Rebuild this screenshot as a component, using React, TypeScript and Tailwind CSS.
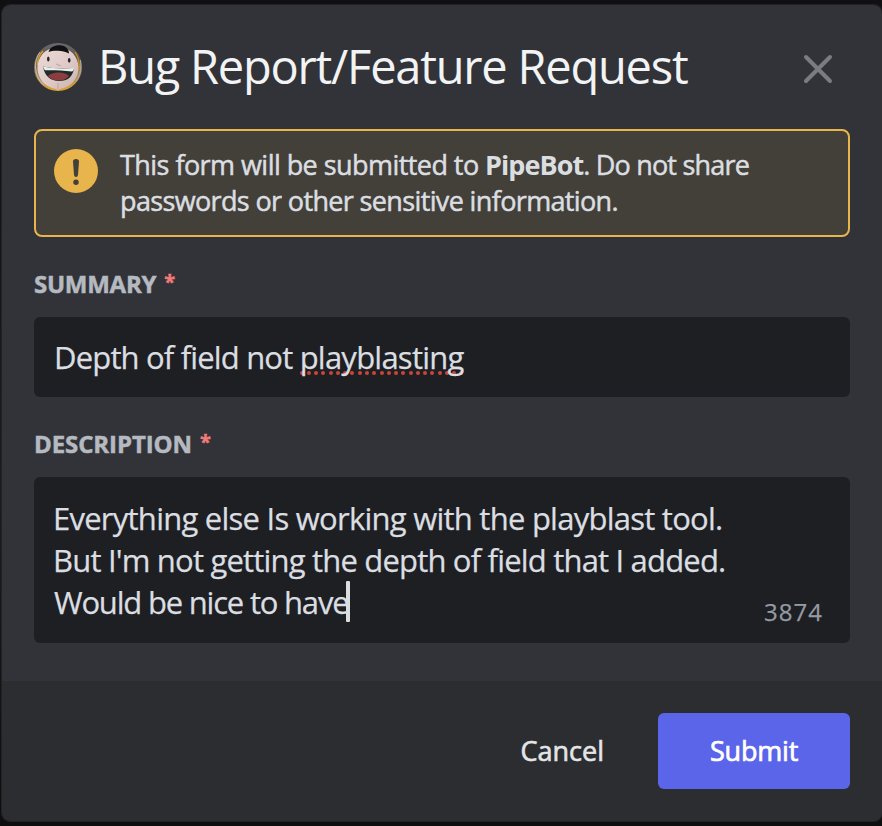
function Avatar() {
  return (
    <svg className="size-[48px] shrink-0" viewBox="0 0 48 48">
      <defs>
        <clipPath id="round">
          <circle cx="24" cy="24" r="24" />
        </clipPath>
        <linearGradient id="ring" x1="0" y1="0" x2="0" y2="1">
          <stop offset="0" stopColor="#6a6a6d" />
          <stop offset="0.3" stopColor="#5d5548" />
          <stop offset="0.6" stopColor="#a3845a" />
          <stop offset="1" stopColor="#e0a52e" />
        </linearGradient>
        <linearGradient id="skin" x1="0" y1="0" x2="1" y2="1">
          <stop offset="0" stopColor="#ecdad7" />
          <stop offset="0.55" stopColor="#dfcac7" />
          <stop offset="1" stopColor="#c8b1ad" />
        </linearGradient>
      </defs>
      <g clipPath="url(#round)">
        <rect width="48" height="48" fill="url(#ring)" />
        <path d="M6 9C2.500 14 1 19 1.500 25C2 32 5 38 10 42" fill="none" stroke="#b9b4ae" strokeWidth="1.200" />
        <path d="M9 8C5 12 3.500 17 3.500 22" fill="none" stroke="#dc9a26" strokeWidth="1.500" />
        <path d="M41 9C44.500 14 46 20 45 27" fill="none" stroke="#c98d24" strokeWidth="1.300" />
        <path d="M46.500 17C47.500 25 46 33 42 38" fill="none" stroke="#aaa5a4" strokeWidth="1.300" />
        <path d="M24 5C36 4 44 13 44.500 24C44.500 32 41 38 36 42C32 45 28 45 24 47C20 45 16 45 12 42C7 38 3.500 32 3.500 24C4 13 12 4 24 5Z" fill="url(#skin)" />
        <path d="M14.500 9C16 3.500 22 1.500 28 2.500C32.500 3.500 35 6.500 35 10.500C31 8.500 28 8 24 7.800C20 7.700 17 8 14.500 9Z" fill="#111115" />
        <path d="M22 21L27 23" stroke="#c4aaa6" strokeWidth="1.200" />
        <ellipse cx="14.300" cy="16" rx="1.300" ry="2.500" fill="#28242a" />
        <ellipse cx="35.200" cy="17.300" rx="1.300" ry="2.400" fill="#28242a" />
        <path d="M9 23.500C17 25.500 30 26 40 25C39 33.500 34 38 25 38C16.500 38 10.500 33 9 23.500Z" fill="#1f2a29" />
        <path d="M9 23.500C17 25.500 30 26 40 25C39.800 27 39.200 28.200 38 28.500C29 27.300 19 27 11 27.200C10 26.300 9.300 25 9 23.500Z" fill="#e9edeb" />
        <path d="M14 33C17.500 28.300 31.500 28.300 35 33C32.500 36 29 37.600 25 37.600C20 37.600 16.500 36.200 14 33Z" fill="#8b3d3f" />
        <path d="M24 40V46" stroke="#b99c91" strokeWidth="0.800" />
      </g>
    </svg>
  );
}

function Label({ text, className }: { text: string; className: string }) {
  return (
    <div className="flex h-6 items-start gap-[8px] text-[24px] leading-6 font-bold text-[#b5bac1]">
      <span className={className}>{text}</span>
      <span className="-mt-[2px] text-[20px] leading-6 text-[#f07b79] [-webkit-text-stroke:0.4px_#f07b79]">*</span>
    </div>
  );
}

function Misspelled({ children }: { children: string }) {
  return (
    <span className="relative isolate inline-block tracking-[-0.76px]">
      {children}
      <span className="absolute top-[35px] left-0 -z-10 flex w-[164px] justify-between">
        {Array.from({ length: 23 }, (_, i) => (
          <span key={i} className="size-1 rounded-full bg-[#c9453a]" />
        ))}
      </span>
    </span>
  );
}

export default function App() {
  return (
    <div className="flex h-[826px] w-[882px] flex-col overflow-hidden bg-linear-to-b from-[#101012] from-0% via-[#1c1c1e] via-60% to-[#0e0e0f] to-100% pt-[5px] pl-[2px] font-['Open_Sans',sans-serif]">
      <div className="flex h-[816px] flex-col overflow-hidden rounded-[8px] bg-[#323338] outline-1 outline-[#222225]">
        <header className="flex h-[124px] shrink-0 pr-[49px] pl-[32px]">
          <div className="pt-[38px]">
            <Avatar />
          </div>
          <h1 className="mt-[31px] ml-[16px] h-[60px] grow text-[47px] leading-[60px] tracking-[-1.22px] whitespace-nowrap text-[#f2f3f5]">
            Bug Report/Feature Request
          </h1>
          <svg className="mt-[49px] size-[30px] shrink-0" viewBox="0 0 30 30" stroke="#7a7c82" strokeWidth="4" strokeLinecap="round">
            <path d="M3 3L27 27M27 3L3 27" />
          </svg>
        </header>

        <main className="flex h-[552px] shrink-0 flex-col px-[32px]">
          <div className="flex h-[108px] w-[816px] shrink-0 rounded-[8px] border-2 border-[#e8b44c] bg-[#434039] pt-[16px] pl-[18px]">
            <svg className="mt-[2px] size-[44px] shrink-0" viewBox="0 0 44 44">
              <circle cx="22" cy="22" r="22" fill="#e8b44c" />
              <path d="M19 12.500Q19 10 22 10Q25 10 25 12.500L24 26Q23.800 28 22 28Q20.200 28 20 26Z" fill="#434039" />
              <circle cx="22" cy="33.300" r="2.700" fill="#434039" />
            </svg>
            <p className="ml-[22px] text-[27px] leading-[36px] whitespace-nowrap text-[#dbdee1]">
              <span className="tracking-[-0.55px] [-webkit-text-stroke:0.5px_#dbdee1]">This form will be submitted to </span>
              <strong className="font-bold tracking-[-0.97px]">PipeBot</strong>
              <span className="tracking-[-0.79px] [-webkit-text-stroke:0.5px_#dbdee1]">. Do not share</span>
              <br />
              <span className="tracking-[-0.64px] [-webkit-text-stroke:0.5px_#dbdee1]">passwords or other sensitive information.</span>
            </p>
          </div>

          <div className="mt-[35px]">
            <Label text="SUMMARY" className="tracking-[-0.25px] [-webkit-text-stroke:0.5px_#b5bac1]" />
          </div>
          <div className="mt-[21px] flex h-[80px] w-[816px] shrink-0 items-center rounded-[6px] bg-[#1e1f22] pl-[20px] text-[31px] leading-[42px] whitespace-pre text-[#dbdee1] [-webkit-text-stroke:0.25px_#dbdee1]">
            <span className="tracking-[-0.83px]">Depth of field not </span>
            <Misspelled>playblasting</Misspelled>
          </div>

          <div className="mt-[35px]">
            <Label text="DESCRIPTION" className="tracking-[-0.1px] [-webkit-text-stroke:0.5px_#b5bac1]" />
          </div>
          <div className="mt-[21px] flex h-[166px] w-[816px] shrink-0 justify-between rounded-[6px] bg-[#1e1f22] pt-[20px] pr-[27px] pl-[19px]">
            <div className="flex flex-col text-[31px] leading-[42px] whitespace-nowrap text-[#dbdee1] [-webkit-text-stroke:0.25px_#dbdee1]">
              <span className="tracking-[-0.75px]">Everything else Is working with the playblast tool.</span>
              <span className="tracking-[-0.81px]">But I'm not getting the depth of field that I added.</span>
              <span className="flex pl-[1px] tracking-[-1.2px]">
                Would be nice to have
                <span className="-ml-[2px] h-[41px] w-[4px] rounded-[1px] bg-[#dbdee1]" />
              </span>
            </div>
            <span className="mt-[103px] h-6 text-[24px] leading-6 tracking-[1px] text-[#949ba4] [-webkit-text-stroke:0.25px_#949ba4]">3874</span>
          </div>
        </main>

        <footer className="flex grow items-center justify-end bg-[#2b2d31] pr-[32px] text-[27px] text-white">
          <button className="mr-[54px] text-[#e4e5e7] [-webkit-text-stroke:0.6px_#e4e5e7]">Cancel</button>
          <button className="h-[76px] w-[192px] rounded-[6px] bg-[#5a65ea] tracking-[-0.2px] [-webkit-text-stroke:0.7px_#ffffff]">Submit</button>
        </footer>
      </div>
    </div>
  );
}
